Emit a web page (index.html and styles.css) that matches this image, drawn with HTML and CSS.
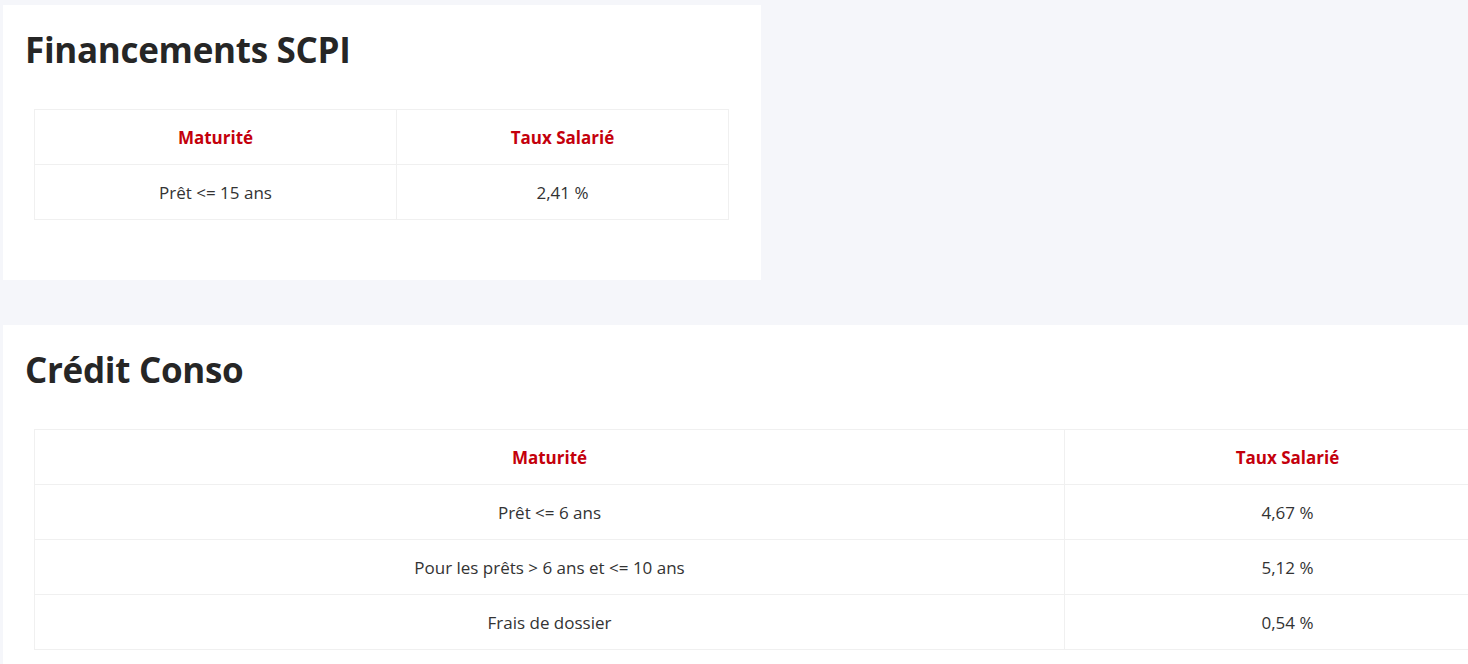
FILE: index.html
```html
<!DOCTYPE html>
<html lang="fr">
  <head>
    <meta charset="UTF-8" />
    <meta name="viewport" content="width=device-width, initial-scale=1.0" />
    <title>Financements</title>
    <link rel="stylesheet" href="styles.css">
  </head>
  <body>
    <div class="page">
      <section class="card card-scpi">
        <h2 class="card-title">Financements SCPI</h2>
        <table class="rates">
          <thead>
            <tr>
              <th class="col-a">Maturité</th>
              <th>Taux Salarié</th>
            </tr>
          </thead>
          <tbody>
            <tr>
              <td>Prêt &lt;= 15 ans</td>
              <td>2,41 %</td>
            </tr>
          </tbody>
        </table>
      </section>

      <section class="card card-conso">
        <h2 class="card-title">Crédit Conso</h2>
        <table class="rates">
          <thead>
            <tr>
              <th class="col-a">Maturité</th>
              <th>Taux Salarié</th>
            </tr>
          </thead>
          <tbody>
            <tr>
              <td>Prêt &lt;= 6 ans</td>
              <td>4,67 %</td>
            </tr>
            <tr>
              <td>Pour les prêts &gt; 6 ans et &lt;= 10 ans</td>
              <td>5,12 %</td>
            </tr>
            <tr>
              <td>Frais de dossier</td>
              <td>0,54 %</td>
            </tr>
          </tbody>
        </table>
      </section>
    </div>
  </body>
</html>
```

FILE: styles.css
```css
* {
  margin: 0;
  padding: 0;
  box-sizing: border-box;
  font-family: "Open Sans", "Noto Sans", sans-serif;
}

html,
body {
  overflow: hidden;
}

body {
  background-color: #f5f6fa;
  color: #333;
}

.page {
  padding: 5px 0 0 3px;
  display: flex;
  flex-direction: column;
  align-items: flex-start;
  gap: 45px;
}

.card {
  background-color: white;
  padding: 21px 22px 60px;
}

.card-scpi {
  width: 758px;
}

.card-conso {
  width: 1540px;
  flex-shrink: 0;
}

.card-title {
  font-size: 35px;
  font-weight: 700;
  color: #262626;
  line-height: 48px;
  margin-bottom: 35px;
  letter-spacing: -0.3px;
}

.rates {
  width: calc(100% - 19px);
  margin: 0 10px 0 9px;
  border-collapse: collapse;
}

.rates th,
.rates td {
  border: 1px solid #f0f0f0;
  text-align: center;
  height: 55px;
  font-size: 17px;
}

.rates th {
  color: #c4000c;
  font-weight: 700;
}

.card-scpi .col-a {
  width: 362px;
}

.card-conso .col-a {
  width: 1030px;
}
```
